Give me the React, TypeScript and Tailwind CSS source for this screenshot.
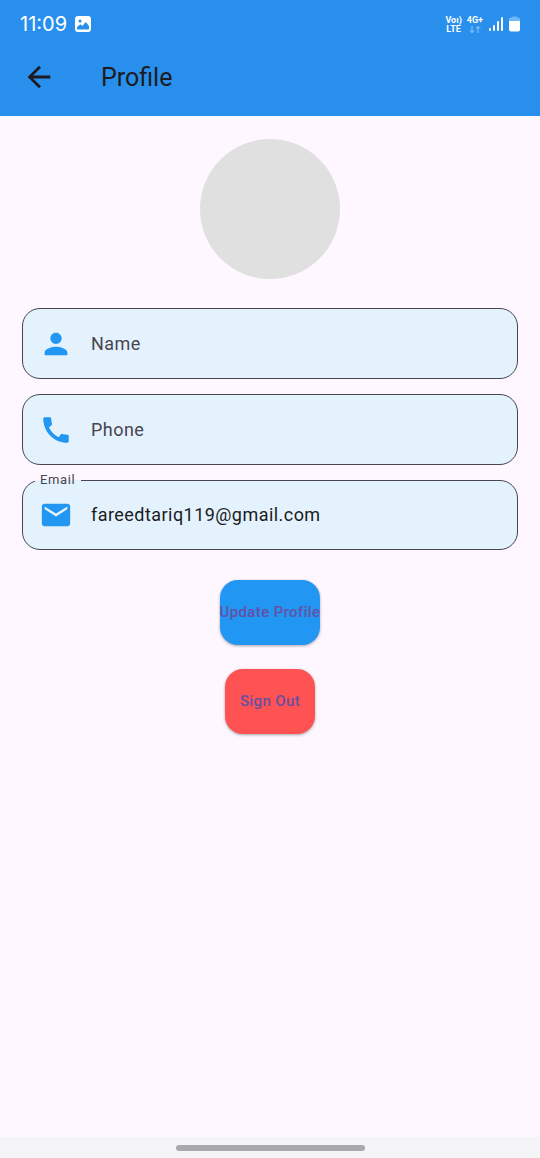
import React from "react";
import type { ReactNode } from "react";

function PersonIcon() {
  return (
    <svg viewBox="0 0 24 24" className="size-[34px] fill-[#2196f3]" aria-hidden="true">
      <path d="M12 12c2.21 0 4-1.79 4-4s-1.79-4-4-4-4 1.79-4 4 1.79 4 4 4zm0 2c-2.67 0-8 1.34-8 4v2h16v-2c0-2.66-5.33-4-8-4z" />
    </svg>
  );
}

function PhoneIcon() {
  return (
    <svg viewBox="0 0 24 24" className="size-[34px] fill-[#2196f3]" aria-hidden="true">
      <path d="M20.01 15.38c-1.23 0-2.42-.2-3.53-.56-.35-.12-.74-.03-1.01.24l-1.57 1.97c-2.83-1.35-5.48-3.9-6.89-6.83l1.95-1.66c.27-.28.35-.67.24-1.02-.37-1.11-.56-2.3-.56-3.53 0-.54-.45-.99-.99-.99H4.19C3.65 3 3 3.24 3 3.99 3 13.28 10.73 21 20.01 21c.71 0 .99-.63.99-1.18v-3.45c0-.54-.45-.99-.99-.99z" />
    </svg>
  );
}

function EmailIcon() {
  return (
    <svg viewBox="0 0 24 24" className="size-[34px] fill-[#2196f3]" aria-hidden="true">
      <path d="M20 4H4c-1.1 0-1.99.9-1.99 2L2 18c0 1.1.9 2 2 2h16c1.1 0 2-.9 2-2V6c0-1.1-.9-2-2-2zm0 4l-8 5-8-5V6l8 5 8-5v2z" />
    </svg>
  );
}

function StatusBar() {
  return (
    <div className="flex h-12 items-center justify-between px-5 text-white">
      <div className="flex items-center gap-2">
        <span className="font-['Inter',sans-serif] text-xl leading-6">11:09</span>
        <svg viewBox="0 0 16 16" className="size-4" aria-hidden="true">
          <path
            fillRule="evenodd"
            fill="currentColor"
            d="M3 0h10a3 3 0 0 1 3 3v10a3 3 0 0 1-3 3H3a3 3 0 0 1-3-3V3a3 3 0 0 1 3-3zM5 3.4a1.6 1.6 0 1 0 0 3.2 1.6 1.6 0 0 0 0-3.2zM2 12.2c0 .8.5 1.3 1.3 1.3h9.4c.8 0 1.3-.5 1.3-1.3V10l-2.6-3.2c-.4-.5-1-.5-1.4 0L7.5 10 6 8.7c-.4-.4-.9-.4-1.3 0L2 11z"
          />
        </svg>
      </div>
      <div className="flex items-center gap-[5px] font-['Roboto',sans-serif] text-[9px] font-bold leading-[9px]">
        <div className="flex flex-col items-center pt-px">
          <span>Voı)</span>
          <span>LTE</span>
        </div>
        <div className="flex flex-col items-center pt-px">
          <span>4G+</span>
          <svg viewBox="0 0 12 9" className="h-[9px] w-3 fill-none stroke-white/50" aria-hidden="true">
            <path d="M3 1v6.5M.8 5.3L3 7.5l2.2-2.2M9 8V1.5M6.8 3.7L9 1.5l2.2 2.2" />
          </svg>
        </div>
        <svg viewBox="0 0 16 16" className="size-4 fill-white" aria-hidden="true">
          <rect x="1" y="12" width="2" height="3" rx="1" />
          <rect x="5" y="9" width="2" height="6" rx="1" />
          <rect x="9" y="5" width="2" height="10" rx="1" />
          <rect x="13" y="1" width="2" height="14" rx="1" />
        </svg>
        <svg viewBox="0 0 11 16" className="h-4 w-[11px] fill-white" aria-hidden="true">
          <path fillOpacity=".35" d="M3 1.5a1 1 0 0 1 1-1h3a1 1 0 0 1 1 1h1a2 2 0 0 1 2 2V5H0V3.5a2 2 0 0 1 2-2z" />
          <path d="M0 5h11v8.5a2 2 0 0 1-2 2H2a2 2 0 0 1-2-2z" />
        </svg>
      </div>
    </div>
  );
}

type FieldProps = {
  id: string;
  label: string;
  type: string;
  icon: ReactNode;
  value?: string;
};

function Field({ id, label, type, icon, value }: FieldProps) {
  return (
    <fieldset className="min-w-0 rounded-[18px] border border-[#49454f] bg-[#e3f2fd]">
      {value && (
        <legend className="ml-3 pr-[6px] pl-[5px] text-[13px] leading-4 tracking-wider text-[#49454f]">
          <label htmlFor={id}>{label}</label>
        </legend>
      )}
      <div className={value ? "-mt-2 flex h-[69px] items-center" : "flex h-[69px] items-center"}>
        <div className="flex w-[66px] shrink-0 justify-center">{icon}</div>
        <input
          id={id}
          type={type}
          aria-label={label}
          defaultValue={value}
          placeholder={label}
          className="h-full min-w-0 flex-1 bg-transparent pr-4 pl-[2px] text-lg tracking-wide text-[#1d1b20] outline-none placeholder:text-[#49454f]"
        />
      </div>
    </fieldset>
  );
}

export default function App() {
  return (
    <div className="flex min-h-screen flex-col bg-[#fef7ff] font-['Roboto',sans-serif]">
      <header className="bg-[#2890ec]">
        <StatusBar />
        <div className="flex h-[68px] items-start">
          <button type="button" aria-label="Back" className="ml-[22px] flex h-[58px] w-[34px] items-center justify-center">
            <svg viewBox="0 0 24 24" className="size-[34px] fill-[#1d1b20]" aria-hidden="true">
              <path d="M20 11H7.83l5.59-5.59L12 4l-8 8 8 8 1.41-1.41L7.83 13H20v-2z" />
            </svg>
          </button>
          <h1 className="ml-[45px] text-[25px] leading-[60px] text-[#1d1b20]">Profile</h1>
        </div>
      </header>

      <main className="flex flex-1 flex-col items-center px-[22px] pt-[23px]">
        <div className="size-[140px] rounded-full bg-[#e0e0e0]" role="img" aria-label="Profile photo" />
        <form className="mt-[29px] flex w-full flex-col items-center">
          <div className="flex w-full flex-col gap-[15px]">
            <Field id="name" label="Name" type="text" icon={<PersonIcon />} />
            <Field id="phone" label="Phone" type="tel" icon={<PhoneIcon />} />
          </div>
          <div className="mt-[7px] w-full">
            <Field id="email" label="Email" type="text" icon={<EmailIcon />} value="fareedtariq119@gmail.com" />
          </div>
          <button
            type="button"
            className="mt-[30px] h-[65px] rounded-[18px] bg-[#2196f3] text-[15px] font-medium tracking-wide whitespace-nowrap text-[#6750a4] shadow-[0_1px_3px_rgba(0,0,0,0.35)]"
          >
            Update Profile
          </button>
          <button
            type="button"
            className="mt-6 h-[65px] rounded-[18px] bg-[#ff5252] px-[15px] text-[15px] font-medium tracking-wide whitespace-nowrap text-[#6750a4] shadow-[0_1px_3px_rgba(0,0,0,0.35)]"
          >
            Sign Out
          </button>
        </form>
      </main>

      <footer className="flex h-[21px] items-center justify-center bg-[#f5f5f7]">
        <div className="h-[6px] w-[35%] rounded-full bg-[#a9a9ab]" />
      </footer>
    </div>
  );
}
